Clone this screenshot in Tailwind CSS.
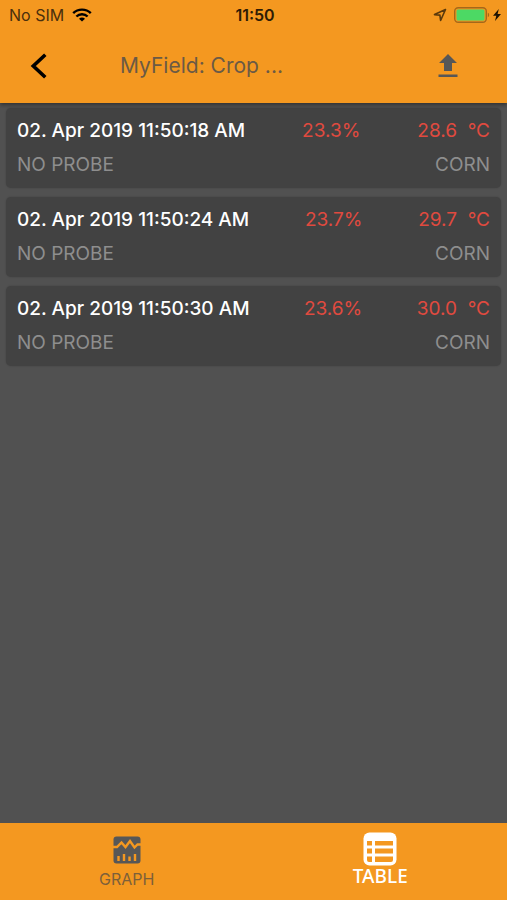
<!DOCTYPE html>
<html lang="en">
<head>
    <meta charset="UTF-8">
    <meta name="viewport" content="width=device-width, initial-scale=1.0">
    <title>MyField: Crop Moisture</title>
    <script src="https://cdn.jsdelivr.net/npm/@tailwindcss/browser@4"></script>
</head>
<body class="min-h-screen flex flex-col bg-[#515151] font-['Inter',sans-serif]">
    <header class="relative bg-[#f49820] shadow-[0_2px_4px_rgba(0,0,0,0.4)]">
        <!-- Status bar -->
        <div class="grid grid-cols-3 items-center h-[30px] pl-[9px] pr-[6px] text-[16px] leading-5 text-[#4a2f0c]">
            <div class="flex items-center gap-2">
                <span>No SIM</span>
                <svg class="w-[20px] h-[14px] text-black" viewBox="0 0 20 14" fill="none" stroke="currentColor" stroke-width="2.4">
                    <path d="M1.2 5.2C6 .4 14 .4 18.800 5.2"/>
                    <path d="M4.400 8.500C7.400 5.500 12.600 5.500 15.600 8.500"/>
                    <path d="M10 13.500L7 10.700C8.700 9.200 11.300 9.200 13 10.700Z" fill="currentColor" stroke="none"/>
                </svg>
            </div>
            <span class="text-center font-semibold text-[#2e1c05]">11:50</span>
            <div class="flex items-center justify-end">
                <svg class="w-[14px] h-[14px] mr-[7px]" viewBox="0 0 14 14" fill="none" stroke="#5a390c" stroke-width="1.6" stroke-linejoin="round">
                    <path d="M12.500 1.500L1.500 6.600L6.900 7.100L7.600 12.500Z"/>
                </svg>
                <svg class="w-[36px] h-[16px] mr-[3px]" viewBox="0 0 36 16">
                    <rect x="0.700" y="0.700" width="31.600" height="14.600" rx="3.500" fill="none" stroke="#a5681a" stroke-width="1.400"/>
                    <rect x="2.500" y="2.500" width="28" height="11" rx="1.500" fill="#4cd964"/>
                    <path d="M33.800 5.800C35.600 6.300 35.600 9.700 33.800 10.200Z" fill="#a5681a"/>
                </svg>
                <svg class="w-[8px] h-[12px]" viewBox="0 0 8 12" fill="#1d1203">
                    <path d="M5.800 0L0 6.800H3.300L2 12L8 5H4.600Z"/>
                </svg>
            </div>
        </div>

        <!-- Navigation bar -->
        <div class="flex items-center h-[73px] pl-[30px] pr-[49px] pb-[2px]">
            <button type="button" aria-label="Back" class="w-[90px] text-black">
                <svg class="w-[18px] h-[26px]" viewBox="0 0 18 26" fill="none" stroke="currentColor" stroke-width="3.600">
                    <path d="M15.300 1.800L3.300 13L15.300 24.200"/>
                </svg>
            </button>
            <h1 class="flex-1 text-[21px] leading-7 text-[#6b5a45]">MyField: Crop ...</h1>
            <button type="button" aria-label="Upload" class="text-[#575757]">
                <svg class="w-[20px] h-[24px]" viewBox="0 0 20 24" fill="currentColor">
                    <path d="M10 0L19 9H14V17H6V9H1Z"/>
                    <path d="M0.500 20.500H19.500V23H0.500Z"/>
                </svg>
            </button>
        </div>
    </header>

    <!-- Measurements -->
    <main class="flex-1 px-[6px] pt-[5px]">
        <ul class="flex flex-col gap-[9px]">
            <li class="h-[80px] rounded-[5px] bg-[#424242] px-[11px] pt-[9px] text-[19px] leading-7 shadow-[0_0_2px_rgba(0,0,0,0.2)]">
                <div class="flex justify-between text-[#e04a3f]">
                    <span class="font-medium text-white">02. Apr 2019 11:50:18 AM</span>
                    <span>23.3%</span>
                    <span class="whitespace-pre">28.6  °C</span>
                </div>
                <div class="flex justify-between pt-[6px] text-[#8e8e8e]">
                    <span>NO PROBE</span>
                    <span>CORN</span>
                </div>
            </li>
            <li class="h-[80px] rounded-[5px] bg-[#424242] px-[11px] pt-[9px] text-[19px] leading-7 shadow-[0_0_2px_rgba(0,0,0,0.2)]">
                <div class="flex justify-between text-[#e04a3f]">
                    <span class="font-medium text-white">02. Apr 2019 11:50:24 AM</span>
                    <span>23.7%</span>
                    <span class="whitespace-pre">29.7  °C</span>
                </div>
                <div class="flex justify-between pt-[6px] text-[#8e8e8e]">
                    <span>NO PROBE</span>
                    <span>CORN</span>
                </div>
            </li>
            <li class="h-[80px] rounded-[5px] bg-[#424242] px-[11px] pt-[9px] text-[19px] leading-7 shadow-[0_0_2px_rgba(0,0,0,0.2)]">
                <div class="flex justify-between text-[#e04a3f]">
                    <span class="font-medium text-white">02. Apr 2019 11:50:30 AM</span>
                    <span>23.6%</span>
                    <span class="whitespace-pre">30.0  °C</span>
                </div>
                <div class="flex justify-between pt-[6px] text-[#8e8e8e]">
                    <span>NO PROBE</span>
                    <span>CORN</span>
                </div>
            </li>
        </ul>
    </main>

    <!-- Tabs -->
    <nav class="grid grid-cols-2 h-[77px] bg-[#f49820]">
        <a href="#graph" class="flex flex-col items-center pt-[13px] text-[16px] leading-5 text-[#7d603a]">
            <svg class="w-[28px] h-[28px] mb-[5px]" viewBox="0 0 28 28">
                <rect x="0.500" y="0.500" width="27" height="27" rx="3" fill="#575757"/>
                <path d="M0 11H4L8.500 6.500L12.500 11L17 5L21.500 11.500L24.500 8.500H28" fill="none" stroke="#f49820" stroke-width="2.4"/>
                <path d="M5.500 20V25M11 18V25M16.500 20.500V25M22 18V25" fill="none" stroke="#f49820" stroke-width="2.400"/>
            </svg>
            GRAPH
        </a>
        <a href="#table" aria-current="page" class="flex flex-col items-center pt-[9px] font-['Noto_Sans',sans-serif] text-[19px] leading-5 font-medium text-white">
            <svg class="w-[34px] h-[34px]" viewBox="0 0 34 34">
                <rect x="0.500" y="0.500" width="33" height="33" rx="6" fill="#fff"/>
                <path d="M4 9H9V13.500H4ZM12 9H30V13.500H12ZM4 16.500H9V21.500H4ZM12 16.500H30V21.500H12ZM4 24.500H9V30H6Q4 30 4 28ZM12 24.500H30V28Q30 30 28 30H12Z" fill="#f49820"/>
            </svg>
            TABLE
        </a>
    </nav>
</body>
</html>
